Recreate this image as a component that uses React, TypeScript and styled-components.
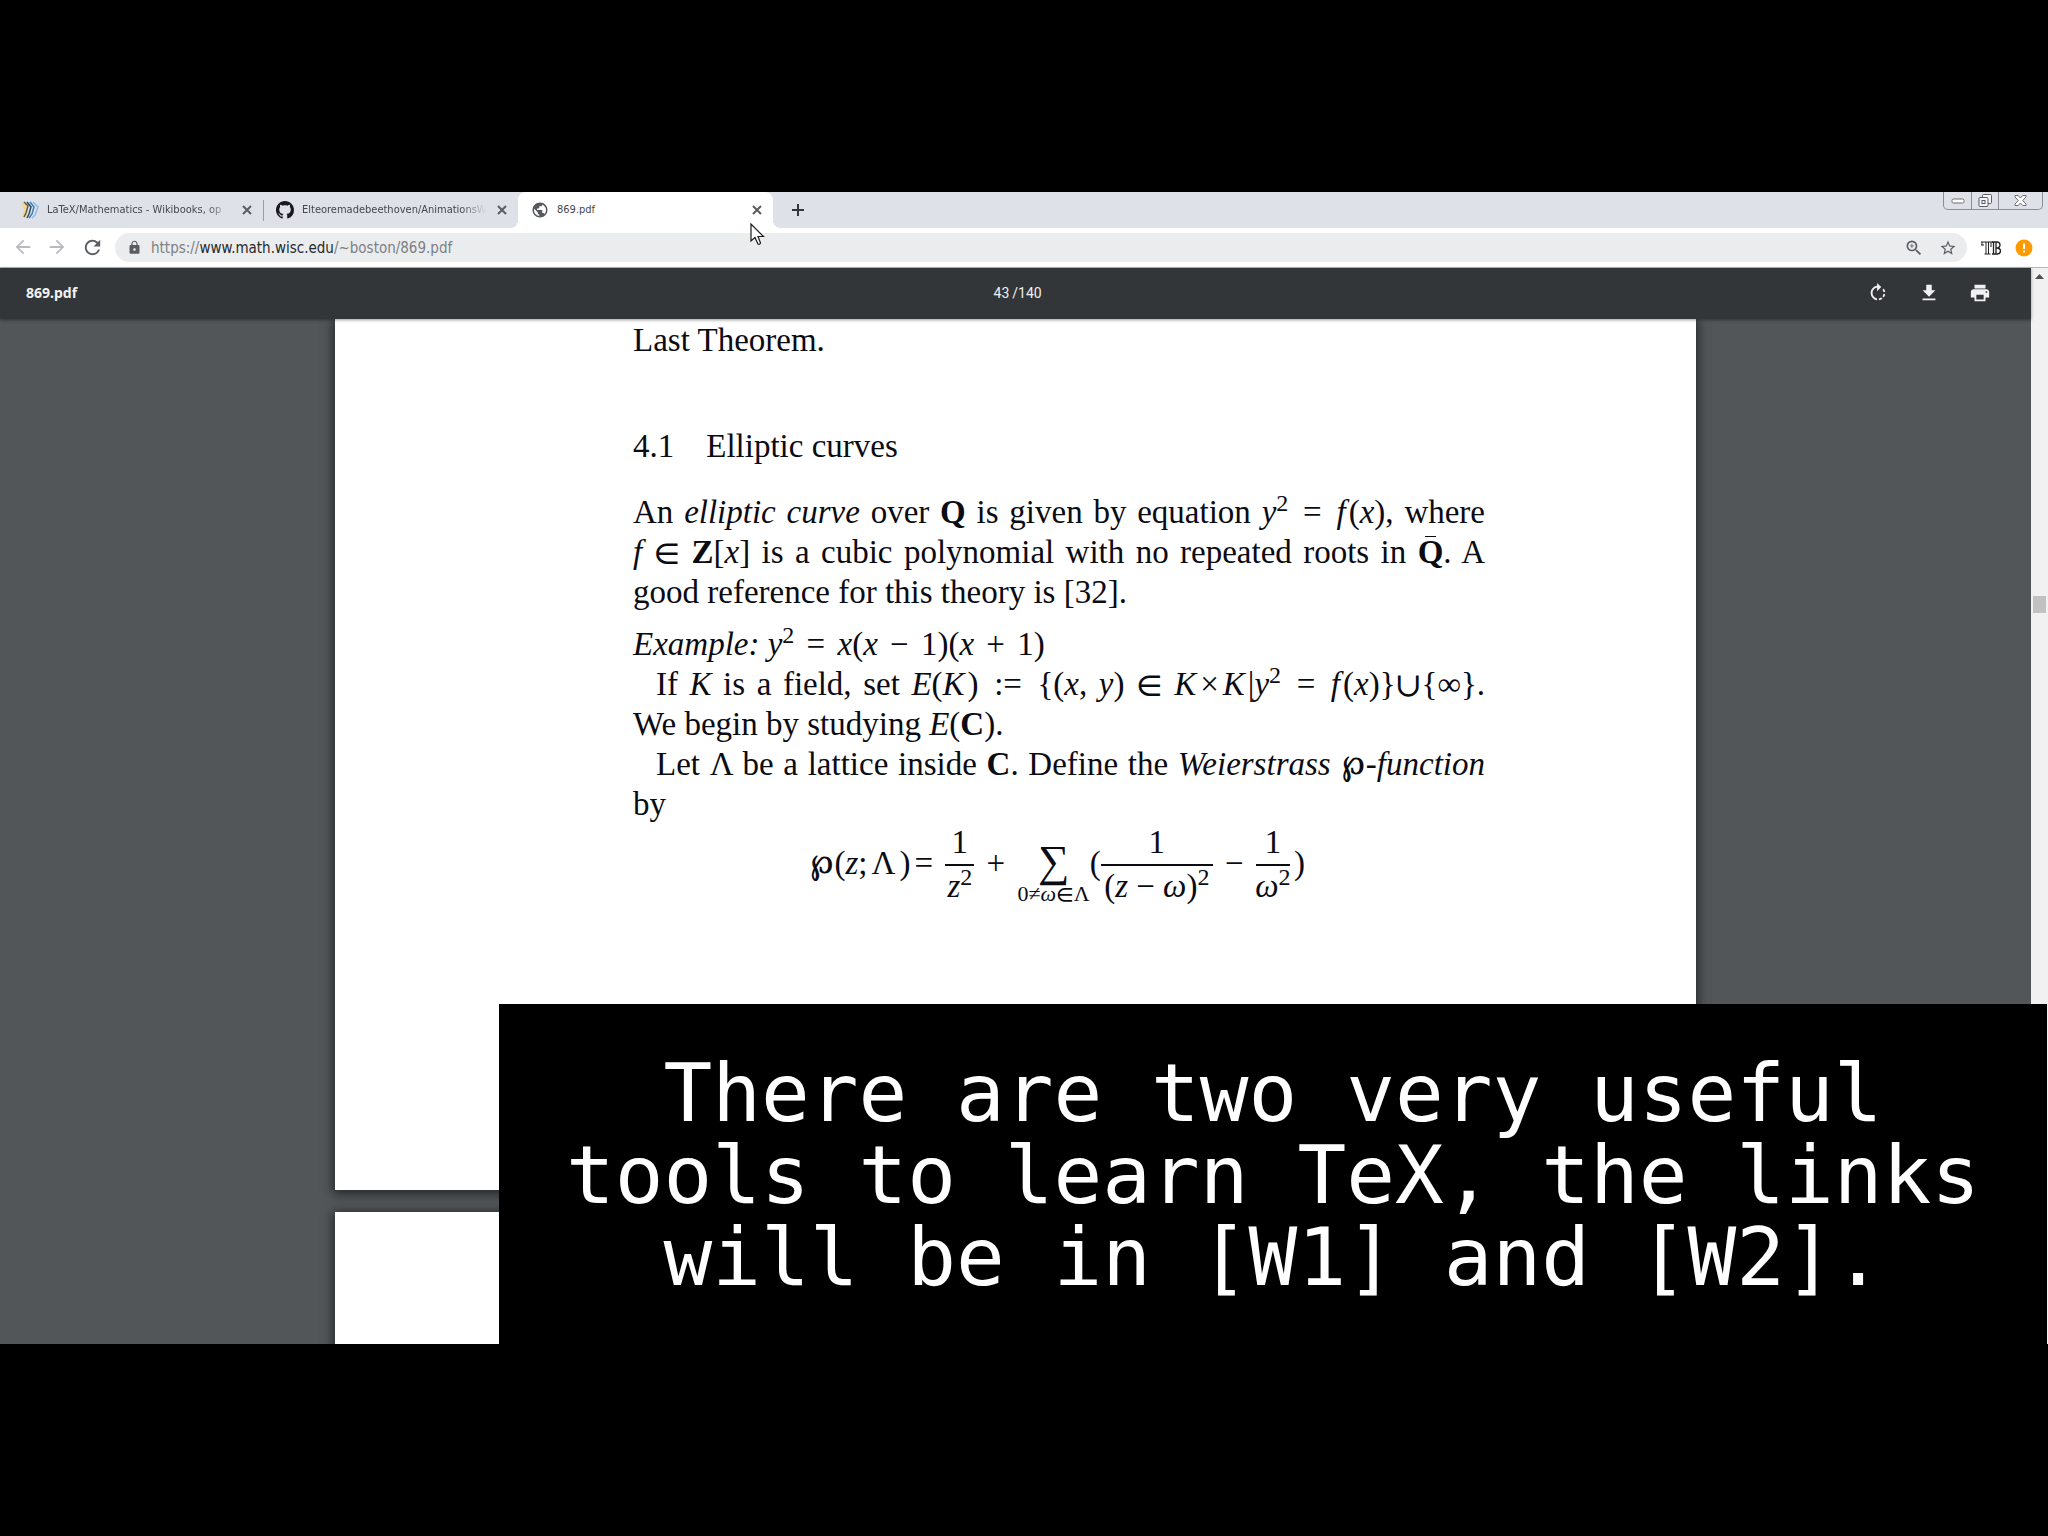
import React from "react";
import styled, { createGlobalStyle } from "styled-components";
import { MdArrowBack, MdArrowForward, MdRefresh, MdLock, MdZoomIn, MdStarBorder, MdPublic } from "react-icons/md";

const GlobalStyle = createGlobalStyle`
  *, *::before, *::after { box-sizing: border-box; }
  body { margin: 0; background: #000; }
  button { border: 0; padding: 0; margin: 0; background: none; color: inherit; font: inherit; }
`;

const ui = `"DejaVu Sans Condensed", "Noto Sans", sans-serif`;
const serif = `"Liberation Serif", "DejaVu Math TeX Gyre", "DejaVu Serif", serif`;

const Stage = styled.main`
  min-height: 100vh;
  display: flex;
  flex-direction: column;
  justify-content: center;
  background: #000;
`;

const Screen = styled.div`
  position: relative;
  width: 100%;
  aspect-ratio: 16 / 9;
  display: flex;
  flex-direction: column;
  overflow: hidden;
  background: #fff;
  font-family: ${ui};
`;

/* ---------- tab strip ---------- */

const TabStrip = styled.header`
  display: flex;
  align-items: flex-start;
  height: 36px;
  padding-left: 8px;
  background: #dee1e8;
`;

const Tabs = styled.div`
  display: flex;
  height: 100%;
`;

const Tab = styled.div<{ $active?: boolean; $divided?: boolean }>`
  position: relative;
  display: flex;
  align-items: center;
  gap: 8px;
  width: 255px;
  height: 36px;
  padding: 0 8px 0 13px;
  color: #45484d;
  background: ${(p) => (p.$active ? "#fff" : "transparent")};
  border-radius: 8px 8px 0 0;
  ${(p) =>
    p.$divided &&
    `&::after { content: ""; position: absolute; right: -1px; top: 8px; width: 1px; height: 21px; background: #9a9da3; }`}
  ${(p) =>
    p.$active &&
    `&::before, &::after { content: ""; position: absolute; bottom: 0; width: 8px; height: 8px; }
     &::before { left: -8px; background: radial-gradient(circle at 0 0, transparent 8px, #fff 8px); }
     &::after { right: -8px; background: radial-gradient(circle at 100% 0, transparent 8px, #fff 8px); }`}
`;

const TabTitle = styled.button<{ $fade?: boolean }>`
  flex: 1;
  min-width: 0;
  overflow: hidden;
  white-space: nowrap;
  text-align: left;
  font-size: 11px;
  line-height: 20px;
  ${(p) => p.$fade && "mask-image: linear-gradient(to right, #000 calc(100% - 24px), transparent);"}
`;

const IconButton = styled.button<{ $size?: number; $color?: string }>`
  display: flex;
  align-items: center;
  justify-content: center;
  flex: none;
  width: ${(p) => p.$size ?? 16}px;
  height: ${(p) => p.$size ?? 16}px;
  color: ${(p) => p.$color ?? "#5a5d61"};
`;

const NewTab = styled(IconButton)`
  margin: 8px 0 0 15px;
`;

const WindowControls = styled.div`
  display: flex;
  margin: 0 5px 0 auto;
  border: 1px solid #8b8e95;
  border-top: 0;
  border-radius: 0 0 5px 5px;
`;

const WindowButton = styled.button<{ $wide?: boolean }>`
  display: flex;
  align-items: center;
  justify-content: center;
  width: ${(p) => (p.$wide ? 44 : 27)}px;
  height: 17px;
  & + & { border-left: 1px solid #8b8e95; }
`;

/* ---------- address bar ---------- */

const Toolbar = styled.nav`
  display: flex;
  align-items: center;
  height: 40px;
  padding: 0 15px 0 12px;
  border-bottom: 1px solid #b4b5b7;
  background: #fff;
`;

const NavButtons = styled.div`
  display: flex;
  gap: 12px;
  margin-right: 11px;
`;

const Omnibox = styled.div`
  flex: 1;
  display: flex;
  align-items: center;
  height: 29px;
  padding: 0 9px 0 12px;
  border-radius: 15px;
  background: #ebecee;
  color: #5a5d61;
`;

const Address = styled.div`
  flex: 1;
  margin-left: 9px;
  font-size: 15px;
  line-height: 22px;
  color: #7c8085;
  outline: none;
  strong { font-weight: 400; color: #26292d; }
`;

const OmniboxActions = styled.div`
  display: flex;
  gap: 14px;
`;

const Extensions = styled.div`
  display: flex;
  align-items: center;
  gap: 14px;
  margin-left: 13px;
`;

/* ---------- PDF viewer ---------- */

const Viewer = styled.div`
  flex: 1;
  min-height: 0;
  display: flex;
`;

const ViewerMain = styled.div`
  flex: 1;
  min-width: 0;
  display: flex;
  flex-direction: column;
  background: #525659;
`;

const PdfBar = styled.div`
  position: relative;
  z-index: 1;
  display: grid;
  grid-template-columns: 1fr auto 1fr;
  align-items: center;
  flex: none;
  height: 51px;
  padding: 0 40px 2px 26px;
  background: #323639;
  box-shadow: 0 1px 3px rgba(0, 0, 0, 0.4);
  color: #f1f1f1;
`;

const PdfTitle = styled.h1`
  margin: 0;
  font: 700 14px/20px "Noto Sans", sans-serif;
`;

const PageCount = styled.label`
  display: flex;
  gap: 3px;
  margin-left: 16px;
  font: 400 14px/20px Roboto, sans-serif;
`;

const PageInput = styled.input`
  width: 18px;
  padding: 0;
  border: 0;
  background: none;
  color: inherit;
  font: inherit;
  text-align: right;
`;

const PdfActions = styled.div`
  display: flex;
  justify-content: flex-end;
  gap: 29px;
`;

const Pages = styled.div`
  flex: 1;
  min-height: 0;
  display: flex;
  flex-direction: column;
  align-items: center;
  gap: 22px;
  overflow: hidden;
`;

const Page = styled.article`
  flex: none;
  width: 1361px;
  max-width: 100%;
  min-height: 871px;
  padding: 1px 211px 0 298px;
  background: #fff;
  box-shadow: 0 2px 10px 2px rgba(0, 0, 0, 0.55);
  color: #0b0b12;
  font-family: ${serif};
  font-size: 33px;
  line-height: 40px;
`;

const Paragraph = styled.p`
  margin: 0 0 12px;
`;

const Section = styled.h2`
  display: flex;
  gap: 32px;
  margin: 66px 0 26px;
  font-size: 33px;
  font-weight: 400;
`;

const Line = styled.span<{ $full?: boolean; $indent?: boolean }>`
  display: block;
  height: 40px;
  white-space: nowrap;
  padding-left: ${(p) => (p.$indent ? 23 : 0)}px;
  ${(p) => p.$full && "text-align: justify; text-align-last: justify;"}
`;

const Sup = styled.sup`
  font-size: 24px;
  line-height: 0;
  vertical-align: 12px;
`;

/* relation or binary operator with its surrounding math space */
const Op = styled.span`
  padding: 0 4px;
`;

/* italic letter whose overhang needs room before the next glyph */
const Letter = styled.i`
  padding-right: 3px;
`;

const Barred = styled.b`
  position: relative;
  &::before {
    content: "";
    position: absolute;
    left: 7px;
    top: 2px;
    width: 11px;
    height: 1px;
    background: #0b0b12;
  }
`;

const Equation = styled.div`
  display: flex;
  align-items: center;
  justify-content: center;
  height: 82px;
`;

const Term = styled.span`
  padding-bottom: 4px;
  white-space: pre;
`;

const Fraction = styled.span<{ $width: number }>`
  display: flex;
  flex-direction: column;
  align-items: center;
  width: ${(p) => p.$width}px;
  line-height: 30px;
`;

const Numerator = styled.span`
  align-self: stretch;
  padding: 2px 0 7px;
  border-bottom: 2px solid #0b0b12;
  text-align: center;
`;

const Denominator = styled.span`
  padding: 5px 0 4px;
  white-space: nowrap;
`;

const Sum = styled.span`
  display: flex;
  flex-direction: column;
  align-items: center;
  gap: 4px;
  padding-top: 22px;
  font-size: 44px;
  line-height: 32px;
`;

const SumRange = styled.span`
  font-size: 22px;
  line-height: 24px;
`;

const Scrollbar = styled.div`
  display: flex;
  flex-direction: column;
  align-items: center;
  width: 17px;
  padding-top: 6px;
  background: #f1f1f1;
`;

const Thumb = styled.div`
  width: 13px;
  height: 17px;
  margin-top: 317px;
  background: #c1c1c1;
`;

/* ---------- overlays ---------- */

const Caption = styled.p`
  position: absolute;
  right: 1px;
  bottom: 0;
  width: calc(100% - 500px);
  height: 340px;
  margin: 0;
  padding-top: 48px;
  background: #000;
  color: #fff;
  font: 400 81px/82px "DejaVu Sans Mono", monospace;
  text-align: center;
  span { display: block; white-space: nowrap; }
`;

const Pointer = styled.svg`
  position: absolute;
  left: 750px;
  top: 31px;
`;

const CloseGlyph = () => (
  <svg width="10" height="10" viewBox="0 0 10 10" stroke="currentColor" strokeWidth="2">
    <path d="M1 1l8 8M9 1L1 9" />
  </svg>
);

const WikibooksIcon = () => (
  <svg width="18" height="18" viewBox="0 0 18 18" fill="none">
    <path d="M0 2l4-1 3 5-1 8-2 3-3-2 2-7z" fill="#f2d98b" />
    <path d="M3 1l4 4-2 7-2 4" stroke="#4f5a55" strokeWidth="1.4" />
    <path d="M6 1l4 5-2 7-2 4" stroke="#2f4a66" strokeWidth="1.5" />
    <path d="M9 1l4 5-2 7-3 4" stroke="#3f7cb8" strokeWidth="1.5" />
    <path d="M12 1l5 5-3 8-3 3" stroke="#8fbde6" strokeWidth="1.5" />
  </svg>
);

const GithubIcon = () => (
  <svg width="18" height="18" viewBox="0 0 16 16" fill="#17191c">
    <path d="M8 0C3.58 0 0 3.58 0 8c0 3.54 2.29 6.53 5.47 7.59.4.07.55-.17.55-.38 0-.19-.01-.82-.01-1.49-2.01.37-2.53-.49-2.69-.94-.09-.23-.48-.94-.82-1.13-.28-.15-.68-.52-.01-.53.63-.01 1.08.58 1.23.82.72 1.21 1.87.87 2.33.66.07-.52.28-.87.51-1.07-1.78-.2-3.64-.89-3.64-3.95 0-.87.31-1.59.82-2.15-.08-.2-.36-1.02.08-2.12 0 0 .67-.21 2.2.82.64-.18 1.32-.27 2-.27.68 0 1.36.09 2 .27 1.53-1.04 2.2-.82 2.2-.82.44 1.1.16 1.92.08 2.12.51.56.82 1.27.82 2.15 0 3.07-1.87 3.75-3.65 3.95.29.25.54.73.54 1.48 0 1.07-.01 1.93-.01 2.2 0 .21.15.46.55.38A8.013 8.013 0 0016 8c0-4.42-3.58-8-8-8z" />
  </svg>
);

const MaterialIcon = ({ d }: { d: string }) => (
  <svg width="22" height="22" viewBox="0 0 24 24" fill="currentColor">
    <path d={d} />
  </svg>
);

const ROTATE =
  "M15.55 5.55L11 1v3.07C7.06 4.56 4 7.92 4 12s3.05 7.44 7 7.93v-2.02c-2.84-.48-5-2.94-5-5.91s2.16-5.43 5-5.91V10l4.55-4.45zM19.93 11c-.17-1.39-.72-2.73-1.62-3.89l-1.42 1.42c.54.75.88 1.6 1.02 2.47h2.02zM13 17.9v2.02c1.39-.17 2.74-.71 3.9-1.61l-1.44-1.44c-.75.54-1.59.89-2.46 1.03zm3.89-2.42l1.42 1.41c.9-1.16 1.45-2.5 1.62-3.89h-2.02c-.14.87-.48 1.72-1.02 2.48z";
const DOWNLOAD = "M19 9h-4V3H9v6H5l7 7 7-7zM5 18v2h14v-2H5z";
const PRINT =
  "M19 8H5c-1.66 0-3 1.34-3 3v6h4v4h12v-4h4v-6c0-1.66-1.34-3-3-3zm-3 11H8v-5h8v5zm3-7c-.55 0-1-.45-1-1s.45-1 1-1 1 .45 1 1-.45 1-1 1zm-1-9H6v4h12V3z";

const App = () => (
  <Stage>
    <GlobalStyle />
    <Screen>
      <TabStrip>
        <Tabs>
          <Tab $divided>
            <WikibooksIcon />
            <TabTitle $fade>LaTeX/Mathematics - Wikibooks, op</TabTitle>
            <IconButton aria-label="Close tab"><CloseGlyph /></IconButton>
          </Tab>
          <Tab>
            <GithubIcon />
            <TabTitle $fade>Elteoremadebeethoven/AnimationsW</TabTitle>
            <IconButton aria-label="Close tab"><CloseGlyph /></IconButton>
          </Tab>
          <Tab $active>
            <MdPublic size={18} color="#55585c" />
            <TabTitle>869.pdf</TabTitle>
            <IconButton aria-label="Close tab"><CloseGlyph /></IconButton>
          </Tab>
        </Tabs>
        <NewTab aria-label="New tab" $size={20} $color="#33363a">
          <svg width="14" height="14" viewBox="0 0 14 14" stroke="currentColor" strokeWidth="2">
            <path d="M7 1v12M1 7h12" />
          </svg>
        </NewTab>
        <WindowControls>
          <WindowButton aria-label="Minimize">
            <svg width="14" height="6" viewBox="0 0 14 6" fill="#fff" stroke="#6c6f75">
              <rect x="1" y="1" width="12" height="4" rx="1.5" />
            </svg>
          </WindowButton>
          <WindowButton aria-label="Restore">
            <svg width="15" height="14" viewBox="0 0 15 14" fill="#f4f5f8" stroke="#5c5f65">
              <rect x="4.5" y="0.5" width="9" height="9" rx="1" />
              <rect x="1" y="3.5" width="9" height="9" rx="1" />
              <rect x="4" y="6.5" width="3" height="3" />
            </svg>
          </WindowButton>
          <WindowButton aria-label="Close window" $wide>
            <svg width="13" height="11" viewBox="0 0 13 11" fill="#fff" stroke="#6c6f75">
              <path d="M1 .5h3.2L6.500 3 8.800.5H12v1.500L8.700 5.500 12 9v1.500H8.800L6.500 8l-2.300 2.500H1V9l3.300-3.500L1 2z" />
            </svg>
          </WindowButton>
        </WindowControls>
      </TabStrip>

      <Toolbar>
        <NavButtons>
          <IconButton aria-label="Back" $size={22} $color="#b9bbbe"><MdArrowBack size={22} /></IconButton>
          <IconButton aria-label="Forward" $size={22} $color="#b9bbbe"><MdArrowForward size={22} /></IconButton>
          <IconButton aria-label="Reload" $size={24}><MdRefresh size={23} /></IconButton>
        </NavButtons>
        <Omnibox>
          <MdLock size={15} />
          <Address role="textbox" aria-label="Address" contentEditable suppressContentEditableWarning spellCheck={false}>
            https://<strong>www.math.wisc.edu</strong>/~boston/869.pdf
          </Address>
          <OmniboxActions>
            <IconButton aria-label="Zoom" $size={20}><MdZoomIn size={20} /></IconButton>
            <IconButton aria-label="Bookmark this page" $size={20}><MdStarBorder size={18} /></IconButton>
          </OmniboxActions>
        </Omnibox>
        <Extensions>
          <IconButton aria-label="TeX extension" $size={21} $color="#222">
            <svg width="20" height="14" viewBox="0 0 20 14" fill="none" stroke="currentColor">
              <path d="M0 1h12M0 4h3M1 1v3M5 1v12M7.500 1v12M10 1v5M3.500 13h6" />
              <path d="M11 1h5.500q2.500.5 2.500 3t-2.500 3q3 .5 3 3t-3 3H11M12.500 1v12M15 1v12M15 7h2" strokeWidth="1.3" />
            </svg>
          </IconButton>
          <IconButton aria-label="Browser menu, update available" $size={18}>
            <svg width="18" height="18" viewBox="0 0 18 18">
              <circle cx="9" cy="9" r="8.5" fill="#ff9a00" />
              <path d="M9 4.500v5.500M9 11.500v2" stroke="#fff" strokeWidth="2" />
            </svg>
          </IconButton>
        </Extensions>
      </Toolbar>

      <Viewer>
        <ViewerMain>
          <PdfBar>
            <PdfTitle>869.pdf</PdfTitle>
            <PageCount>
              <PageInput aria-label="Page number" defaultValue="43" />
              <span>/140</span>
            </PageCount>
            <PdfActions>
              <IconButton aria-label="Rotate" $size={22} $color="#f1f1f1"><MaterialIcon d={ROTATE} /></IconButton>
              <IconButton aria-label="Download" $size={22} $color="#f1f1f1"><MaterialIcon d={DOWNLOAD} /></IconButton>
              <IconButton aria-label="Print" $size={22} $color="#f1f1f1"><MaterialIcon d={PRINT} /></IconButton>
            </PdfActions>
          </PdfBar>
          <Pages>
            <Page>
              <Line>Last Theorem.</Line>
              <Section><span>4.1</span><span>Elliptic curves</span></Section>
              <Paragraph>
                <Line $full>
                  An <i>elliptic curve</i> over <b>Q</b> is given by equation <i>y</i><Sup>2</Sup> <Op>=</Op> <Letter>f</Letter>(<i>x</i>), where
                </Line>
                <Line $full>
                  <i>f</i> ∈ <b>Z</b>[<i>x</i>] is a cubic polynomial with no repeated roots in <Barred>Q</Barred>. A
                </Line>
                <Line>good reference for this theory is [32].</Line>
              </Paragraph>
              <Paragraph as="div">
                <Line>
                  <i>Example: y</i><Sup>2</Sup> <Op>=</Op> <i>x</i>(<i>x</i> <Op>−</Op> 1)(<i>x</i> <Op>+</Op> 1)
                </Line>
                <Line $full $indent>
                  If <i>K</i> is a field, set <i>E</i>(<Letter>K</Letter>) <Op>:=</Op> {"{"}(<i>x</i>, <i>y</i>) ∈ <i>K</i><Op>×</Op><Letter>K</Letter>|<i>y</i><Sup>2</Sup> <Op>=</Op> <Letter>f</Letter>(<i>x</i>){"}"}∪{"{"}∞{"}"}.
                </Line>
                <Line>We begin by studying <i>E</i>(<b>C</b>).</Line>
                <Line $full $indent>
                  Let Λ be a lattice inside <b>C</b>. Define the <i>Weierstrass </i>℘<i>-function</i>
                </Line>
                <Line>by</Line>
                <Equation>
                  <Term>℘(<i>z</i>;<Op>Λ</Op>)<Op>=</Op> </Term>
                  <Fraction $width={29}>
                    <Numerator>1</Numerator>
                    <Denominator><i>z</i><Sup>2</Sup></Denominator>
                  </Fraction>
                  <Term> <Op>+</Op> </Term>
                  <Sum>
                    ∑
                    <SumRange>0≠<i>ω</i>∈Λ</SumRange>
                  </Sum>
                  <Term>(</Term>
                  <Fraction $width={112}>
                    <Numerator>1</Numerator>
                    <Denominator>(<i>z</i> − <i>ω</i>)<Sup>2</Sup></Denominator>
                  </Fraction>
                  <Term> <Op>−</Op> </Term>
                  <Fraction $width={34}>
                    <Numerator>1</Numerator>
                    <Denominator><i>ω</i><Sup>2</Sup></Denominator>
                  </Fraction>
                  <Term><Op>)</Op></Term>
                </Equation>
              </Paragraph>
            </Page>
            <Page />
          </Pages>
        </ViewerMain>
        <Scrollbar>
          <svg width="9" height="5" viewBox="0 0 9 5" fill="#505050"><path d="M0 5l4.500-5L9 5z" /></svg>
          <Thumb />
        </Scrollbar>
      </Viewer>

      <Caption>
        <span>There are two very useful</span>
        <span>tools to learn TeX, the links</span>
        <span>will be in [W1] and [W2].</span>
      </Caption>

      <Pointer width="15" height="24" viewBox="0 0 15 24" fill="#fff" stroke="#1a1a1a" strokeWidth="1.2">
        <path d="M1 1v17l4-3.500 3 6.500q1.500 1 2.500-1L8 13.500h5.500z" />
      </Pointer>
    </Screen>
  </Stage>
);

export default App;
